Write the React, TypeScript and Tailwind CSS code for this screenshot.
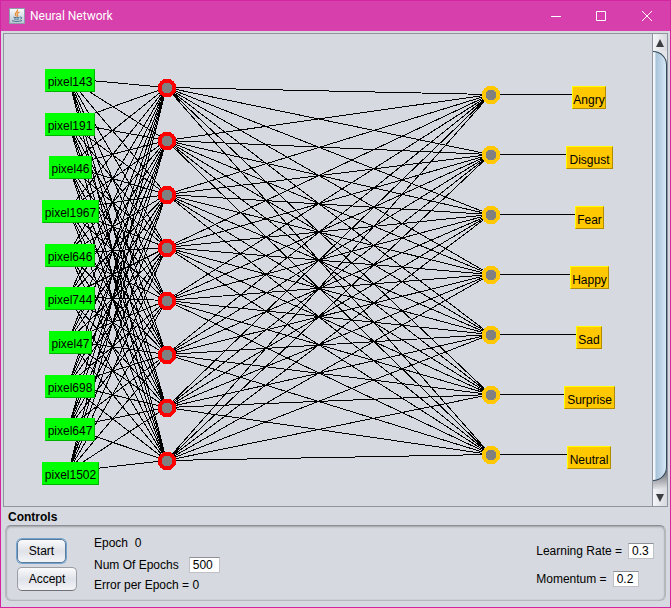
import React from "react";

const inputs = [
  { name: "pixel143", x: 41, y: 44, width: "w-[50px]" },
  { name: "pixel191", x: 41, y: 88, width: "w-[50px]" },
  { name: "pixel46", x: 45, y: 131, width: "w-[43px]" },
  { name: "pixel1967", x: 38, y: 175, width: "w-[57px]" },
  { name: "pixel646", x: 41, y: 219, width: "w-[50px]" },
  { name: "pixel744", x: 41, y: 262, width: "w-[50px]" },
  { name: "pixel47", x: 45, y: 306, width: "w-[43px]" },
  { name: "pixel698", x: 41, y: 350, width: "w-[50px]" },
  { name: "pixel647", x: 41, y: 393, width: "w-[50px]" },
  { name: "pixel1502", x: 38, y: 437, width: "w-[57px]" },
];

const hidden = [54, 107, 161, 214, 267, 321, 374, 427];

const outputs = [
  { name: "Angry", x: 568, y: 61, width: "w-[34px]" },
  { name: "Disgust", x: 562, y: 121, width: "w-[47px]" },
  { name: "Fear", x: 571, y: 181, width: "w-[29px]" },
  { name: "Happy", x: 566, y: 241, width: "w-[39px]" },
  { name: "Sad", x: 572, y: 301, width: "w-[26px]" },
  { name: "Surprise", x: 560, y: 361, width: "w-[51px]" },
  { name: "Neutral", x: 563, y: 421, width: "w-[44px]" },
];

const INPUT_X = 64;
const HIDDEN_X = 163;
const OUTPUT_X = 487;
const LABEL_X = 585;

function Line({ x1, y1, x2, y2 }: { x1: number; y1: number; x2: number; y2: number }) {
  return <line x1={x1 + 0.5} y1={y1 + 0.5} x2={x2 + 0.5} y2={y2 + 0.5} />;
}

function Neuron({ x, y, ring }: { x: number; y: number; ring: string }) {
  return (
    <g stroke="none">
      <circle cx={x} cy={y} r={9.2} fill={ring} />
      <circle cx={x} cy={y} r={5.3} fill="#808080" />
    </g>
  );
}

function Network() {
  return (
    <div className="relative min-w-0 flex-1 overflow-hidden">
      <svg
        className="absolute left-0 top-0 h-[472px] w-[648px]"
        viewBox="0 0 648 472"
        stroke="#000"
        strokeWidth="1"
        shapeRendering="crispEdges"
        aria-hidden="true"
      >
        {inputs.map((n) =>
          hidden.map((h) => (
            <Line key={n.name + h} x1={INPUT_X} y1={n.y} x2={HIDDEN_X - 1} y2={h - 1} />
          )),
        )}
        {hidden.map((h) =>
          outputs.map((o) => (
            <Line key={o.name + h} x1={HIDDEN_X - 1} y1={h - 1} x2={OUTPUT_X - 1} y2={o.y - 1} />
          )),
        )}
        {outputs.map((o) => (
          <Line key={o.name} x1={OUTPUT_X} y1={o.y - 1} x2={LABEL_X} y2={o.y - 1} />
        ))}
        {hidden.map((h) => (
          <Neuron key={h} x={HIDDEN_X} y={h} ring="#ff0000" />
        ))}
        {outputs.map((o) => (
          <Neuron key={o.name} x={OUTPUT_X} y={o.y} ring="#ffc800" />
        ))}
      </svg>
      {inputs.map((n) => (
        <div
          key={n.name}
          className={`absolute flex h-[23px] items-start justify-center whitespace-nowrap border border-t-[#00ff00] border-r-[#00b200] border-b-[#00b200] border-l-[#00ff00] bg-[#00ff00] pt-1 leading-4 ${n.width}`}
          style={{ left: n.x, top: n.y - 9 }}
        >
          {n.name}
        </div>
      ))}
      {outputs.map((o) => (
        <div
          key={o.name}
          className={`absolute flex h-[23px] items-start justify-center whitespace-nowrap border border-t-[#ffff00] border-r-[#b28c00] border-b-[#b28c00] border-l-[#ffff00] bg-[#ffc800] pt-[5px] leading-4 ${o.width}`}
          style={{ left: o.x, top: o.y - 9 }}
        >
          {o.name}
        </div>
      ))}
    </div>
  );
}

function ScrollBar() {
  return (
    <div className="flex w-[15px] shrink-0 flex-col border-l border-[#8f949e]">
      <button
        type="button"
        aria-label="Scroll up"
        className="flex h-[17px] items-center justify-center bg-linear-to-r from-[#f4f5f8] to-[#d6d9df]"
      >
        <svg width="8" height="8" viewBox="0 0 8 8" aria-hidden="true">
          <path d="M4 0 8 8H0Z" fill="#3c3d40" />
        </svg>
      </button>
      <div className="flex flex-1 flex-col bg-linear-to-b from-[#e4e6ea] from-95% via-[#6f7278] via-96% to-[#e0e2e6]">
        <div className="h-[430px] rounded-r-[14px] border-y border-r border-[#33475a] bg-linear-to-r from-[#f7fafd] from-10% via-[#a9c3d9] via-25% to-[#d5e9f7]" />
      </div>
      <button
        type="button"
        aria-label="Scroll down"
        className="flex h-[17px] items-center justify-center bg-linear-to-r from-[#f4f5f8] to-[#d6d9df]"
      >
        <svg width="8" height="8" viewBox="0 0 8 8" aria-hidden="true">
          <path d="M0 0H8L4 8Z" fill="#3c3d40" />
        </svg>
      </button>
    </div>
  );
}

function JavaIcon() {
  return (
    <svg width="16" height="16" viewBox="0 0 16 16" aria-hidden="true">
      <defs>
        <linearGradient id="tile" x1="0" y1="0" x2="0" y2="1">
          <stop offset="0" stopColor="#fafcfd" />
          <stop offset="1" stopColor="#b8c6d3" />
        </linearGradient>
      </defs>
      <rect x="0.5" y="0.5" width="15" height="15" fill="url(#tile)" stroke="#8e9cab" />
      <path d="M8.6 1.5C9 4 5.8 4.700 6.300 6.400c.2.900 1 1.300 1.200 2.100M10.600 4c-2.300 1-3 1.800-2.200 2.800.6.700.3 1.300-.2 1.700" fill="none" stroke="#e8882a" strokeWidth="1.200" />
      <path d="M4.500 9.200c1.500.5 4.500.5 6 0M5 10.900c1.500.5 3.700.5 5.200 0M3 12.700c2.500 1 7.500 1 10-.2M11 9.200c2.300-.6 2.300 1.500.3 2" fill="none" stroke="#45708f" />
    </svg>
  );
}

function TitleBar() {
  return (
    <header className="flex h-[30px] items-center bg-[#d740ac] pl-2 text-white">
      <JavaIcon />
      <h1 className="flex-1 pl-[5px] font-[Roboto,'Open_Sans',sans-serif] text-[12px] leading-4 font-normal">
        Neural Network
      </h1>
      <button type="button" aria-label="Minimize" className="flex h-full w-[44px] items-center justify-center">
        <svg width="10" height="10" viewBox="0 0 10 10" stroke="#fff" aria-hidden="true">
          <path d="M0 5.500H10" />
        </svg>
      </button>
      <button type="button" aria-label="Maximize" className="flex h-full w-[46px] items-center justify-center">
        <svg width="10" height="10" viewBox="0 0 10 10" fill="none" stroke="#fff" aria-hidden="true">
          <path d="M.5.5H9.500V9.500H.5Z" />
        </svg>
      </button>
      <button type="button" aria-label="Close" className="flex h-full w-[46px] items-center justify-center">
        <svg width="10" height="10" viewBox="0 0 10 10" stroke="#fff" aria-hidden="true">
          <path d="M0 0 10 10M10 0 0 10" />
        </svg>
      </button>
    </header>
  );
}

const fieldClass =
  "h-4 border border-[#bfc1c6] border-t-[#8d8f94] bg-white px-[3px] text-[12px] leading-3 outline-none";

function Controls() {
  return (
    <section aria-labelledby="controls-title" className="px-1 pt-[3px]">
      <h2 id="controls-title" className="pl-[3px] leading-[15px] font-bold">
        Controls
      </h2>
      <div className="flex h-[76px] items-start rounded-[6px] border border-[#b4b7bc] border-t-[#8c8f95] bg-[#d6d9df] pr-[11px] pl-[11px] shadow-[inset_0_1px_2px_#a0a3a9,inset_1px_0_1px_#b8bbc1,inset_-1px_0_1px_#b8bbc1]">
        <div className="flex flex-col items-start gap-1 pt-[13px]">
          <button
            type="button"
            className="h-6 w-[49px] rounded-[5px] border border-[#5b7b9b] bg-linear-to-b from-[#fbfbfc] via-[#dfe2e8] to-[#f3f4f8] leading-4 shadow-[0_0_0_1px_#73a4d1]"
          >
            Start
          </button>
          <button
            type="button"
            className="h-6 w-[60px] rounded-[5px] border border-[#9a9da3] border-b-[#6e7075] bg-linear-to-b from-[#fbfbfc] via-[#dfe2e8] to-[#f3f4f8] leading-4"
          >
            Accept
          </button>
        </div>
        <div className="flex flex-1 flex-col gap-1 pt-[9px] pl-[17px] leading-4">
          <p className="whitespace-pre">Epoch  0</p>
          <div className="flex items-center gap-[10px] pt-[2px]">
            <label htmlFor="epochs">Num Of Epochs</label>
            <input id="epochs" defaultValue="500" className={`${fieldClass} w-[31px]`} />
          </div>
          <p>Error per Epoch = 0</p>
        </div>
        <div className="flex flex-col gap-3 pt-[17px] leading-4">
          <div className="flex items-center gap-[6px]">
            <label htmlFor="rate">Learning Rate =</label>
            <input id="rate" defaultValue="0.3" className={`${fieldClass} w-[26px]`} />
          </div>
          <div className="flex items-center gap-[6px]">
            <label htmlFor="momentum">Momentum =</label>
            <input id="momentum" defaultValue="0.2" className={`${fieldClass} w-[26px]`} />
          </div>
        </div>
      </div>
    </section>
  );
}

export default function App() {
  return (
    <div className="min-h-screen border border-[#d2259f] bg-[#d6d9df] font-['Liberation_Sans',Arial,sans-serif] text-[12px] text-black">
      <TitleBar />
      <main>
        <div className="mx-[2px] mt-[2px] flex h-[474px] border border-[#8f949e]">
          <Network />
          <ScrollBar />
        </div>
        <Controls />
      </main>
    </div>
  );
}
